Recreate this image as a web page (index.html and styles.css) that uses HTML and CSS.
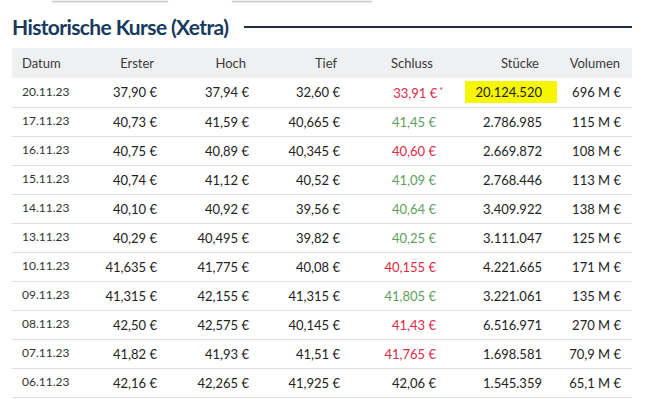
FILE: index.html
```html
<html>
  <head>
    <title>Historische Kurse</title>
    <link rel="stylesheet" href="styles.css">
  </head>
  <body>
    <div class="tabs">
      <div class="tab tab-1"></div>
      <div class="tab tab-2"></div>
    </div>

    <div class="quotes">
      <div class="section-head">
        <h2>Historische Kurse (Xetra)</h2>
        <div class="rule"></div>
      </div>

      <table class="history">
        <colgroup>
          <col class="c-date"><col class="c-open"><col class="c-high"><col class="c-low">
          <col class="c-close"><col class="c-pieces"><col class="c-volume">
        </colgroup>
        <thead>
          <tr>
            <th class="left">Datum</th>
            <th>Erster</th>
            <th>Hoch</th>
            <th>Tief</th>
            <th>Schluss</th>
            <th>Stücke</th>
            <th>Volumen</th>
          </tr>
        </thead>
        <tbody>
          <tr>
            <td class="date">20.11.23</td><td>37,90 €</td><td>37,94 €</td><td>32,60 €</td>
            <td class="down">33,91 €<span class="star">*</span></td>
            <td><span class="mark">20.124.520</span></td><td>696 M €</td>
          </tr>
          <tr>
            <td class="date">17.11.23</td><td>40,73 €</td><td>41,59 €</td><td>40,665 €</td>
            <td class="up">41,45 €</td><td>2.786.985</td><td>115 M €</td>
          </tr>
          <tr>
            <td class="date">16.11.23</td><td>40,75 €</td><td>40,89 €</td><td>40,345 €</td>
            <td class="down">40,60 €</td><td>2.669.872</td><td>108 M €</td>
          </tr>
          <tr>
            <td class="date">15.11.23</td><td>40,74 €</td><td>41,12 €</td><td>40,52 €</td>
            <td class="up">41,09 €</td><td>2.768.446</td><td>113 M €</td>
          </tr>
          <tr>
            <td class="date">14.11.23</td><td>40,10 €</td><td>40,92 €</td><td>39,56 €</td>
            <td class="up">40,64 €</td><td>3.409.922</td><td>138 M €</td>
          </tr>
          <tr>
            <td class="date">13.11.23</td><td>40,29 €</td><td>40,495 €</td><td>39,82 €</td>
            <td class="up">40,25 €</td><td>3.111.047</td><td>125 M €</td>
          </tr>
          <tr>
            <td class="date">10.11.23</td><td>41,635 €</td><td>41,775 €</td><td>40,08 €</td>
            <td class="down">40,155 €</td><td>4.221.665</td><td>171 M €</td>
          </tr>
          <tr>
            <td class="date">09.11.23</td><td>41,315 €</td><td>42,155 €</td><td>41,315 €</td>
            <td class="up">41,805 €</td><td>3.221.061</td><td>135 M €</td>
          </tr>
          <tr>
            <td class="date">08.11.23</td><td>42,50 €</td><td>42,575 €</td><td>40,145 €</td>
            <td class="down">41,43 €</td><td>6.516.971</td><td>270 M €</td>
          </tr>
          <tr>
            <td class="date">07.11.23</td><td>41,82 €</td><td>41,93 €</td><td>41,51 €</td>
            <td class="down">41,765 €</td><td>1.698.581</td><td>70,9 M €</td>
          </tr>
          <tr>
            <td class="date">06.11.23</td><td>42,16 €</td><td>42,265 €</td><td>41,925 €</td>
            <td>42,06 €</td><td>1.545.359</td><td>65,1 M €</td>
          </tr>
        </tbody>
      </table>
    </div>
  </body>
</html>
```

FILE: styles.css
```css
body { margin: 0; background: #fff; font-family: Lato, "Open Sans", sans-serif; color: #222; }

/* cut-off tabs above the section */
.tabs { display: flex; height: 2px; }
.tab { height: 1px; border-bottom: 1px solid #c8c8c8; background: #f4f4f4; box-shadow: 0 1px 2px rgba(0,0,0,0.12); }
.tab-1 { width: 116px; margin-left: 52px; }
.tab-2 { width: 140px; margin-left: 64px; }

.quotes { width: 620px; padding-left: 12px; }

.section-head { display: flex; align-items: center; margin-top: 10px; height: 28px; }
.section-head h2 {
  margin: 0; font-size: 21px; font-weight: 700; color: #173a5e;
  letter-spacing: -0.62px; white-space: nowrap;
}
.section-head .rule { flex: 1; height: 0; border-top: 2px solid #1e2b38; margin-left: 16px; margin-top: 1px; }

.history { width: 620px; border-collapse: collapse; table-layout: fixed; margin-top: 8px; }
.c-date { width: 88px; }
.c-open { width: 68px; }
.c-high { width: 92px; }
.c-low { width: 91px; }
.c-close { width: 96px; }
.c-pieces { width: 106px; }
.c-volume { width: 79px; }

.history th {
  background: #eef0f2; height: 30px; padding: 0 14px 0 0;
  font-size: 13px; font-weight: 400; color: #3a3a3a; text-align: right;
}
.history th.left { text-align: left; padding-left: 10px; }
.history th:last-child { padding-right: 12px; }

.history td {
  height: 29px; padding: 0 11px 0 0; border-bottom: 1px solid #dedede;
  font-size: 13px; line-height: 14px; text-align: right; white-space: nowrap; color: #222;
}
.history td.date { text-align: left; padding-left: 10px; padding-bottom: 1px; font-size: 12px; color: #333; }

.down { color: #dc2a45 !important; }
.up { color: #5e9e5e !important; }
.star { font-size: 9px; vertical-align: 4px; margin-left: 2px; margin-right: -7px; }

.mark { display: inline-block; background: #f6f600; padding: 4px 15px 4px 11px; margin-right: -15px; }
```
